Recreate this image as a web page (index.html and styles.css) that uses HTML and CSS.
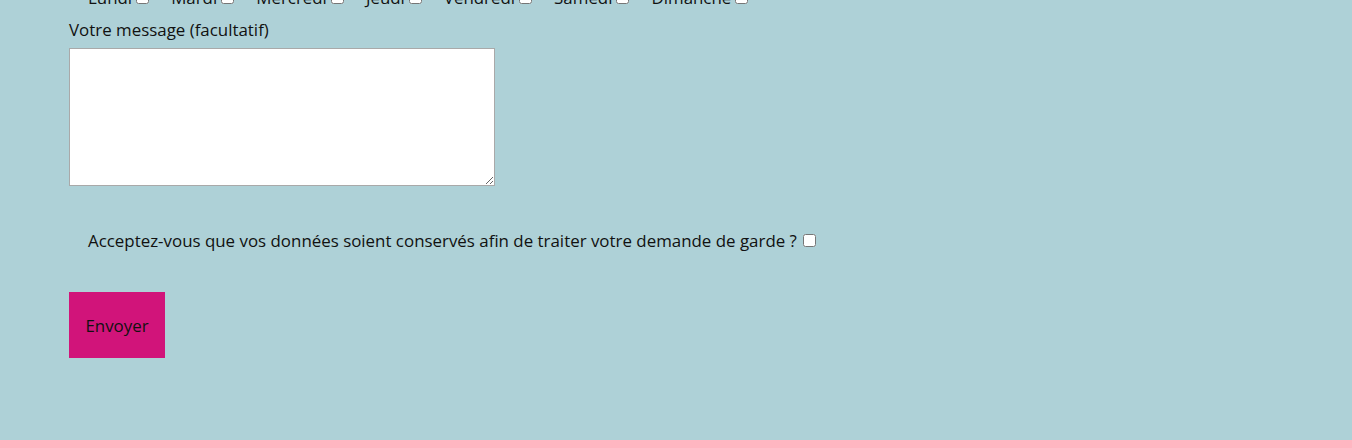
FILE: index.html
```html
<!DOCTYPE html>
<html lang="fr">
<head>
<meta charset="utf-8">
<title>Formulaire</title>
<link rel="stylesheet" href="styles.css">
</head>
<body>
<main class="page">
  <form class="form">
    <div class="days">
      <label class="day">Lundi<input type="checkbox"></label>
      <label class="day">Mardi<input type="checkbox"></label>
      <label class="day">Mercredi<input type="checkbox"></label>
      <label class="day">Jeudi<input type="checkbox"></label>
      <label class="day">Vendredi<input type="checkbox"></label>
      <label class="day">Samedi<input type="checkbox"></label>
      <label class="day">Dimanche<input type="checkbox"></label>
    </div>
    <label class="field-label" for="msg">Votre message (facultatif)</label>
    <textarea id="msg" class="message"></textarea>
    <div class="consent">
      <label>Acceptez-vous que vos données soient conservés afin de traiter votre demande de garde ?<input type="checkbox"></label>
    </div>
    <button type="button" class="send">Envoyer</button>
  </form>
</main>
<footer class="footer"></footer>
</body>
</html>
```

FILE: styles.css
```css
html, body {
  margin: 0;
  padding: 0;
}
body {
  background: #aed1d7;
  font-family: "Open Sans", Lato, sans-serif;
  font-size: 16.9px;
  color: #111;
  height: 448px;
  overflow: hidden;
  display: flex;
  flex-direction: column;
}
.page {
  height: 440px;
  overflow: hidden;
  padding-left: 69px;
}
.form {
  display: flex;
  flex-direction: column;
  align-items: flex-start;
  margin-top: -12px;
}
.days {
  display: flex;
  gap: 19px;
  padding-left: 19px;
  line-height: 20px;
}
.day input {
  margin: 0 3px 0 4px;
  width: 13px;
  height: 13px;
}
.field-label {
  margin-top: 12px;
  line-height: 20px;
}
.message {
  box-sizing: border-box;
  width: 426px;
  height: 138px;
  margin-top: 8px;
  border: 1px solid #a9a9a9;
  background: #fff;
}
.consent {
  margin-top: 45px;
  padding-left: 19px;
  line-height: 20px;
}
.consent input {
  margin: 0 0 0 6px;
  width: 13px;
  height: 13px;
}
.send {
  margin-top: 41px;
  width: 96px;
  height: 66px;
  border: none;
  background: #d1147a;
  color: #111;
  font-family: inherit;
  font-size: 16.9px;
  padding: 0;
}
.footer {
  flex: 1;
  background: #ffb6c1;
}
```
